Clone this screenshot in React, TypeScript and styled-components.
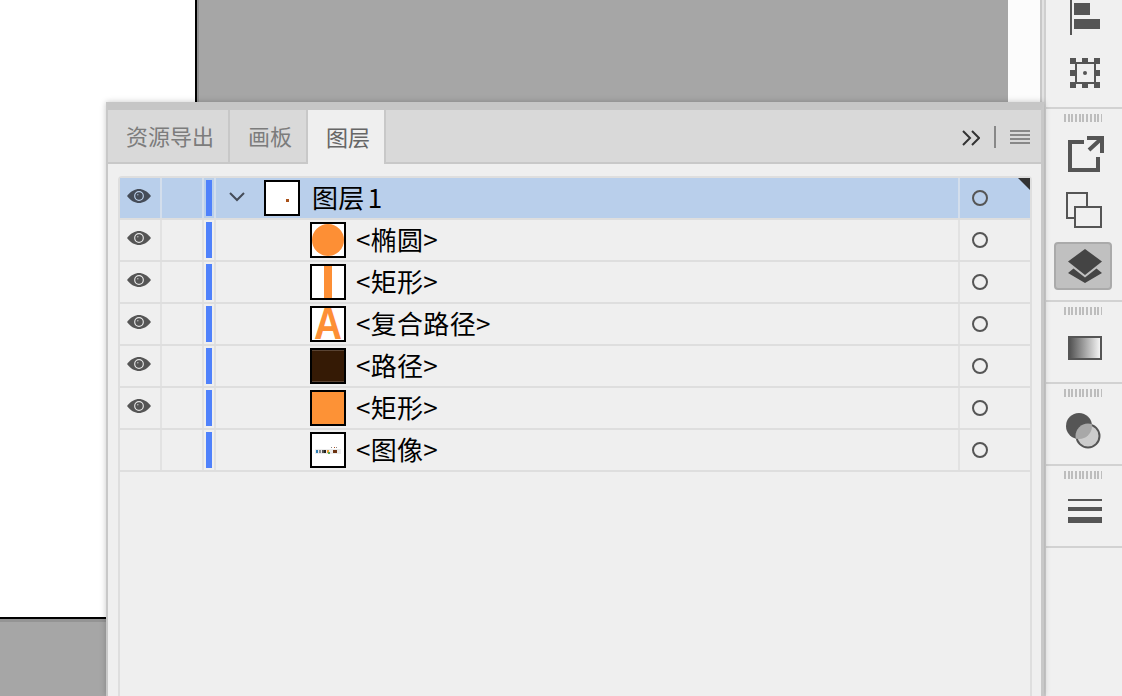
import { createGlobalStyle, styled } from 'styled-components'

const GlobalStyle = createGlobalStyle`
  html, body {
    margin: 0;
    height: 100%;
    overflow: hidden;
    background: #f0f0f0;
  }

  * {
    box-sizing: border-box;
  }
`

const layers = [
  { name: '<椭圆>', visible: true, thumb: 'circle' },
  { name: '<矩形>', visible: true, thumb: 'bar' },
  { name: '<复合路径>', visible: true, thumb: 'letter' },
  { name: '<路径>', visible: true, thumb: 'dark' },
  { name: '<矩形>', visible: true, thumb: 'orange' },
  { name: '<图像>', visible: false, thumb: 'image' },
]

function EyeIcon({ $active }: { $active?: boolean }) {
  const dark = $active ? '#454c58' : '#555555'
  const ring = $active ? '#bcd0ea' : '#e6e6e6'
  return (
    <EyeSvg width="24" height="14" viewBox="0 0 24 14">
      <path d="M0 7C4 2 8 0 12 0S20 2 24 7C20 12 16 14 12 14S4 12 0 7Z" fill={dark} />
      <circle cx="12" cy="7" r="4.3" fill="none" stroke={ring} strokeWidth="1.2" />
      <circle cx="12" cy="7" r="3.2" fill={dark} />
      <circle cx="10.8" cy="5.8" r="0.8" fill={ring} opacity="0.7" />
    </EyeSvg>
  )
}

function Thumbnail({ kind }: { kind: string }) {
  if (kind === 'layer') {
    return (
      <ThumbBox>
        <svg width="32" height="32" viewBox="0 0 32 32">
          <rect x="20" y="17" width="3" height="3" fill="#a9521a" />
        </svg>
      </ThumbBox>
    )
  }
  if (kind === 'circle') {
    return (
      <ThumbBox>
        <svg width="32" height="32" viewBox="0 0 32 32">
          <circle cx="16" cy="16" r="16" fill="#fd8f35" />
        </svg>
      </ThumbBox>
    )
  }
  if (kind === 'bar') {
    return (
      <ThumbBox>
        <OrangeBar />
      </ThumbBox>
    )
  }
  if (kind === 'letter') {
    return (
      <ThumbBox>
        <ThumbLetter>A</ThumbLetter>
      </ThumbBox>
    )
  }
  if (kind === 'dark') {
    return (
      <ThumbBox $fill="#351a05">
        <DarkEdge />
      </ThumbBox>
    )
  }
  if (kind === 'orange') {
    return <ThumbBox $fill="#fd9236" />
  }
  return (
    <ThumbBox>
      <svg width="32" height="32" viewBox="0 0 32 32">
        <rect x="3" y="15" width="26" height="5" fill="#ececec" />
        <rect x="4" y="16" width="2" height="3" fill="#2e7fb8" />
        <rect x="7" y="16" width="2" height="3" fill="#8a8a8a" />
        <rect x="10" y="16" width="2" height="3" fill="#555555" />
        <rect x="12" y="16" width="2" height="3" fill="#222222" />
        <rect x="15" y="16" width="2" height="3" fill="#f0a030" />
        <rect x="16" y="18" width="2" height="2" fill="#58a050" />
        <rect x="21" y="16" width="4" height="3" fill="#6b3210" />
        <rect x="19" y="13" width="1" height="1" fill="#888888" />
        <rect x="22" y="13" width="1" height="1" fill="#b05020" />
        <rect x="24" y="13" width="1" height="1" fill="#888888" />
      </svg>
    </ThumbBox>
  )
}

function TargetCircle() {
  return (
    <svg width="18" height="18" viewBox="0 0 18 18">
      <circle cx="9" cy="9" r="7" fill="none" stroke="#555555" strokeWidth="2" />
    </svg>
  )
}

export default function App() {
  return (
    <>
      <GlobalStyle />
      <Workspace>
        <Canvas>
          <Artboard>
            <Pasteboard />
            <LightMargin />
          </Artboard>
          <BottomBoard />
          <Panel>
            <TabBar>
              <Tab>资源导出</Tab>
              <Tab>画板</Tab>
              <Tab $active>图层</Tab>
              <TabControls>
                <MoreIcon width="18" height="16" viewBox="0 0 18 16">
                  <path d="M1 1L8 8L1 15M10 1L17 8L10 15" fill="none" stroke="#333333" strokeWidth="2" />
                </MoreIcon>
                <ControlDivider />
                <svg width="20" height="14" viewBox="0 0 20 14">
                  <path d="M0 1H20M0 5H20M0 9H20M0 13H20" stroke="#888888" strokeWidth="2" />
                </svg>
              </TabControls>
            </TabBar>
            <LayerTable>
              <LayerRow $selected>
                <Cell $selected>
                  <EyeIcon $active />
                </Cell>
                <Cell $selected />
                <Cell $selected>
                  <ColorBar />
                </Cell>
                <NameCell $selected $indent={48}>
                  <Chevron width="16" height="10" viewBox="0 0 16 10">
                    <path d="M1 1L8 8L15 1" fill="none" stroke="#454c58" strokeWidth="2" />
                  </Chevron>
                  <Thumbnail kind="layer" />
                  <LayerName $gap={12}>图层 1</LayerName>
                </NameCell>
                <TargetCell $selected>
                  <TargetCircle />
                  <CornerMark />
                </TargetCell>
              </LayerRow>
              {layers.map((layer, index) => (
                <LayerRow key={index}>
                  <Cell>{layer.visible && <EyeIcon />}</Cell>
                  <Cell />
                  <Cell>
                    <ColorBar />
                  </Cell>
                  <NameCell $indent={94}>
                    <Thumbnail kind={layer.thumb} />
                    <LayerName $gap={10}>{layer.name}</LayerName>
                  </NameCell>
                  <TargetCell>
                    <TargetCircle />
                  </TargetCell>
                </LayerRow>
              ))}
            </LayerTable>
          </Panel>
        </Canvas>
        <Gutter />
        <Dock>
          <DockSection $height={109}>
            <DockIcon width="58" height="35" viewBox="0 0 58 35">
              <rect x="15" y="0" width="2" height="35" />
              <rect x="19" y="3" width="16" height="12" />
              <rect x="19" y="19" width="26" height="10" />
            </DockIcon>
            <DockIcon $top={23} width="58" height="30" viewBox="0 0 58 30">
              <rect x="21" y="5" width="19" height="20" fill="none" stroke="#555555" strokeWidth="2" />
              <path d="M15 0H21V6H15ZM27 0H33V5H27ZM39 0H45V6H39ZM15 12H20V18H15ZM40 12H45V18H40ZM15 24H21V30H15ZM27 25H33V30H27ZM39 24H45V30H39Z" />
              <circle cx="30" cy="15" r="2" />
            </DockIcon>
          </DockSection>
          <DockSection $height={193}>
            <Grip />
            <DockIcon $top={14} width="58" height="36" viewBox="0 0 58 36">
              <path d="M29 6H15V34H43V21M32 2H47V17M34 14L46 3" fill="none" stroke="#555555" strokeWidth="4" />
            </DockIcon>
            <DockIcon $top={20} width="58" height="36" viewBox="0 0 58 36">
              <rect x="12" y="1" width="20" height="25" fill="none" stroke="#555555" strokeWidth="2" />
              <rect x="20" y="15" width="26" height="20" fill="#f0f0f0" stroke="#555555" strokeWidth="2" />
            </DockIcon>
            <DockButton>
              <svg width="34" height="34" viewBox="0 0 34 34" fill="#444444">
                <path d="M17 0L34 12.5L17 26L0 12.5Z" />
                <path d="M0 24L5.5 19.5L17 28.5L28.5 19.5L34 24L17 34Z" />
              </svg>
            </DockButton>
          </DockSection>
          <DockSection $height={82}>
            <Grip />
            <GradientSwatch />
          </DockSection>
          <DockSection $height={82}>
            <Grip />
            <DockIcon $top={16} width="58" height="36" viewBox="0 0 58 36">
              <defs>
                <clipPath id="overlap">
                  <circle cx="24" cy="13" r="13" />
                </clipPath>
              </defs>
              <circle cx="24" cy="13" r="13" />
              <circle cx="33" cy="23" r="11.5" fill="#cccccc" stroke="#555555" strokeWidth="2" />
              <circle cx="33" cy="23" r="12.5" fill="#a8a8a8" clipPath="url(#overlap)" />
            </DockIcon>
          </DockSection>
          <DockSection $height={82}>
            <Grip />
            <DockIcon $top={20} width="58" height="24" viewBox="0 0 58 24">
              <rect x="13" y="0" width="34" height="2" />
              <rect x="13" y="8" width="34" height="4" />
              <rect x="13" y="18" width="34" height="6" />
            </DockIcon>
          </DockSection>
        </Dock>
      </Workspace>
    </>
  )
}

const Workspace = styled.div`
  display: flex;
  height: 100vh;
  overflow: hidden;
  font-family: 'Noto Sans CJK SC', sans-serif;
`

const Canvas = styled.div`
  position: relative;
  width: 1040px;
  display: flex;
  flex-direction: column;
  background-color: #a6a6a6;
`

const Artboard = styled.div`
  height: 619px;
  display: flex;
  padding-left: 195px;
  background-color: #ffffff;
  border-bottom: 2px solid #000000;
`

const Pasteboard = styled.div`
  width: 813px;
  background-color: #a6a6a6;
  border-left: 2px solid #000000;
  box-shadow: inset 2px 0 0 #8f8f8f;
`

const LightMargin = styled.div`
  flex: 1;
  background-color: #fcfcfc;
`

const BottomBoard = styled.div`
  flex: 1;
  background-color: #a6a6a6;
  box-shadow: inset 0 3px 0 #949494;
`

const Gutter = styled.div`
  width: 4px;
  background-color: #e2e2e2;
  border-left: 2px solid #c8c8c8;
`

const Panel = styled.section`
  position: absolute;
  top: 102px;
  left: 106px;
  bottom: 0;
  width: 938px;
  display: flex;
  flex-direction: column;
  background-color: #efefef;
  border-top: 8px solid #c6c6c6;
  border-left: 2px solid #c8c8c8;
  border-right: 3px solid #c8c8c8;
  box-shadow: 0 0 6px rgba(0, 0, 0, 0.22);
`

const TabBar = styled.div`
  height: 54px;
  flex-shrink: 0;
  display: flex;
  background-color: #d9d9d9;
  border-bottom: 2px solid #c8c8c8;
`

const Tab = styled.div<{ $active?: boolean }>`
  display: flex;
  align-items: center;
  padding: 0 14px 2px 18px;
  font-size: 22px;
  color: ${(p) => (p.$active ? '#666666' : '#7c7c7c')};
  background-color: ${(p) => (p.$active ? '#efefef' : 'transparent')};
  border-right: 2px solid #c8c8c8;
  margin-bottom: ${(p) => (p.$active ? '-2px' : '0')};
`

const TabControls = styled.div`
  margin-left: auto;
  padding: 1px 11px 0 0;
  display: flex;
  align-items: center;
  gap: 14px;
`

const MoreIcon = styled.svg`
  margin-top: 2px;
`

const ControlDivider = styled.div`
  width: 2px;
  height: 22px;
  background-color: #888888;
`

const LayerTable = styled.div`
  flex: 1;
  margin: 12px 9px 0 10px;
  border: 2px solid #dedede;
  border-bottom: none;
  border-radius: 4px 4px 0 0;
`

const LayerRow = styled.div<{ $selected?: boolean }>`
  height: 42px;
  display: grid;
  grid-template-columns: 40px 40px 10px 1fr 70px;
  column-gap: 2px;
  background-color: ${(p) => (p.$selected ? '#d3deec' : '#e2e2e2')};
  border-bottom: 2px solid #dedede;
`

const Cell = styled.div<{ $selected?: boolean }>`
  position: relative;
  display: flex;
  align-items: center;
  justify-content: center;
  background-color: ${(p) => (p.$selected ? '#b9cfeb' : '#efefef')};
`

const NameCell = styled(Cell)<{ $indent: number }>`
  justify-content: flex-start;
  padding-left: ${(p) => p.$indent}px;
`

const TargetCell = styled(Cell)`
  justify-content: flex-start;
  padding-left: 11px;
`

const EyeSvg = styled.svg`
  margin: 0 2px 5px 0;
`

const Chevron = styled.svg`
  position: absolute;
  left: 13px;
  top: 14px;
`

const ColorBar = styled.div`
  width: 6px;
  height: 36px;
  background-color: #4f81fb;
`

const CornerMark = styled.div`
  position: absolute;
  top: 0;
  right: 0;
  width: 0;
  height: 0;
  border-top: 12px solid #333333;
  border-left: 12px solid transparent;
`

const ThumbBox = styled.div<{ $fill?: string }>`
  position: relative;
  width: 36px;
  height: 36px;
  flex-shrink: 0;
  display: flex;
  align-items: center;
  justify-content: center;
  border: 2px solid #000000;
  background-color: ${(p) => p.$fill ?? '#ffffff'};
`

const OrangeBar = styled.div`
  width: 8px;
  height: 100%;
  background-color: #fd8f35;
`

const ThumbLetter = styled.span`
  display: block;
  font-family: 'Liberation Sans', sans-serif;
  font-weight: 700;
  font-size: 44px;
  line-height: 32px;
  color: #fd8f35;
  transform: scaleX(0.88);
`

const DarkEdge = styled.div`
  width: 100%;
  height: 100%;
  border-top: 1px solid #5a4434;
  border-bottom: 1px solid #5a4434;
`

const LayerName = styled.span<{ $gap: number }>`
  margin-left: ${(p) => p.$gap}px;
  padding-bottom: 2px;
  font-size: 26px;
  line-height: 36px;
  letter-spacing: 0.3px;
  word-spacing: -3px;
  color: #000000;
  white-space: pre;
`

const Dock = styled.aside`
  width: 78px;
  display: flex;
  flex-direction: column;
  background-color: #f0f0f0;
  border-left: 2px solid #cfcfcf;
`

const DockSection = styled.div<{ $height: number }>`
  height: ${(p) => p.$height}px;
  display: flex;
  flex-direction: column;
  align-items: center;
  border-bottom: 2px solid #d2d2d2;
`

const Grip = styled.div`
  width: 38px;
  height: 8px;
  margin: 5px 2px 0 0;
  flex-shrink: 0;
  background: repeating-linear-gradient(90deg, #bdbdbd 0, #bdbdbd 2px, transparent 2px, transparent 3.7px);
`

const DockIcon = styled.svg<{ $top?: number }>`
  display: block;
  flex-shrink: 0;
  margin-top: ${(p) => p.$top ?? 0}px;
  fill: #555555;
`

const DockButton = styled.div`
  width: 58px;
  height: 48px;
  margin: 14px 2px 0 0;
  padding-left: 4px;
  display: flex;
  align-items: center;
  justify-content: center;
  background-color: #c0c0c0;
  border: 2px solid #aaaaaa;
  border-radius: 4px;
`

const GradientSwatch = styled.div`
  width: 34px;
  height: 24px;
  margin: 21px 0 0 2px;
  border: 2px solid #555555;
  background: linear-gradient(90deg, #555555, #f4f4f4);
`
